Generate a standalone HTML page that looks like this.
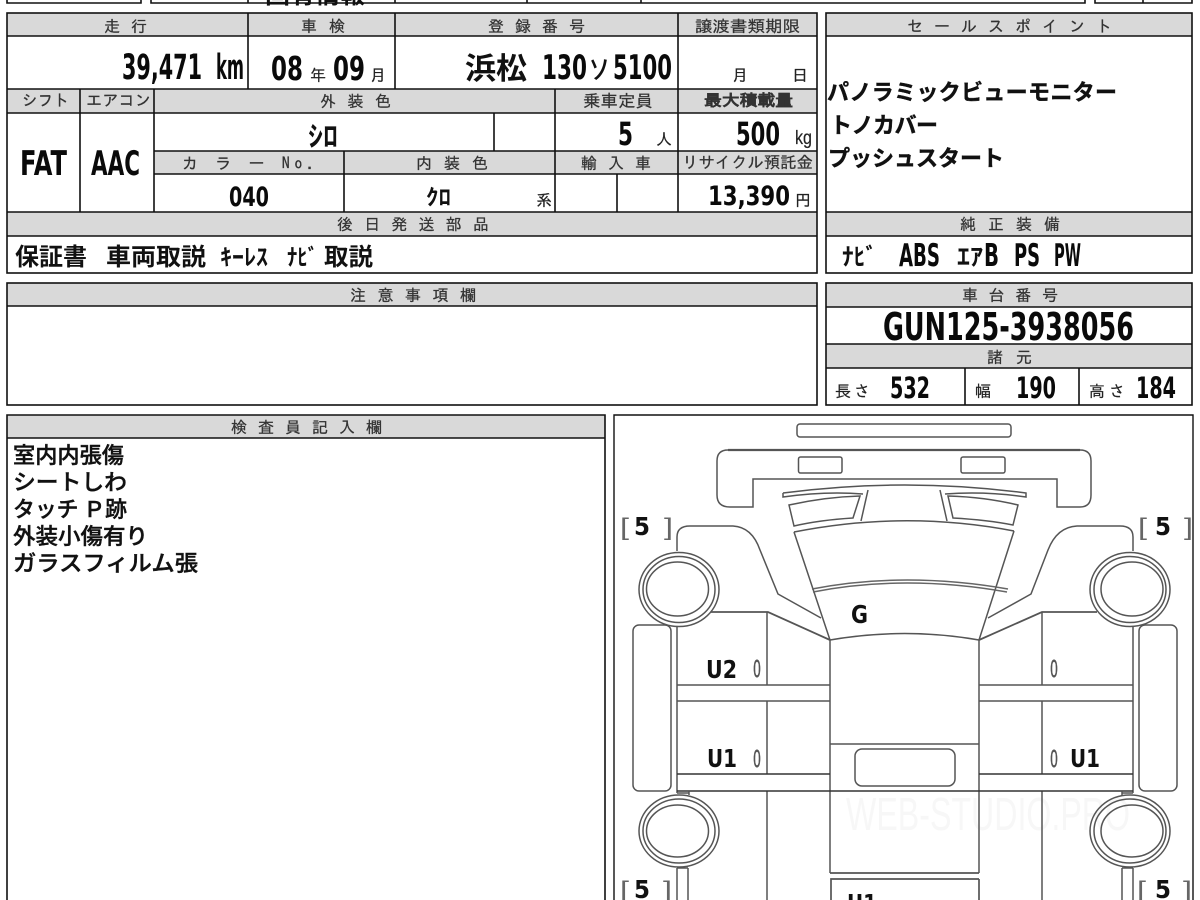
<!DOCTYPE html>
<html lang="ja"><head><meta charset="utf-8"><title>Inspection sheet</title>
<style>
html,body{margin:0;padding:0;background:#fff;width:1200px;height:900px;overflow:hidden}
svg{display:block;position:absolute;left:0;top:0;filter:blur(.35px)}
text{font-family:"Liberation Sans","IPAGothic","Noto Sans CJK JP",sans-serif;white-space:pre}
.h{font-family:"IPAGothic","Noto Sans CJK JP",sans-serif;font-size:16px;fill:#333;stroke:#333;stroke-width:.25}
.s{font-family:"IPAGothic","Noto Sans CJK JP",sans-serif;font-size:16px;fill:#222;stroke:#222;stroke-width:.2}
.v{font-family:"DejaVu Sans","Liberation Sans",sans-serif;font-weight:700;font-size:34px;fill:#0a0a0a}
.j{font-family:"Noto Sans CJK JP",sans-serif;font-weight:700;font-size:24px;fill:#111}
.n{font-family:"Noto Sans CJK JP",sans-serif;font-weight:500;font-size:22px;fill:#111;stroke:#111;stroke-width:.4}
.t{fill:none;stroke:#111;stroke-width:1.6}
.d{fill:none;stroke:#555;stroke-width:1.5}
.l{font-family:"DejaVu Sans","Liberation Sans",sans-serif;font-weight:700;font-size:25px;fill:#111}
.b{font-size:24px;fill:#666}
.z{font-family:"DejaVu Sans",sans-serif;font-size:23px;fill:#555;stroke:#555;stroke-width:.5}
</style></head><body>
<svg width="1200" height="900" viewBox="0 0 1200 900" xmlns="http://www.w3.org/2000/svg">
<!-- top stubs -->
<g class="t">
<path d="M7 0V3H141V0M151 0V3H1085V0M248 0V3M395 0V3M527 0V3M641 0V3M1095 0V3H1192V0M1143 0V3"/>
</g>
<text class="j" x="265" y="3" textLength="100" lengthAdjust="spacingAndGlyphs">固有情報</text>
<!-- grey header fills -->
<g fill="#d9d9d9">
<rect x="7" y="13" width="810" height="23"/><rect x="7" y="89" width="810" height="24"/>
<rect x="154" y="151" width="663" height="23"/><rect x="7" y="212" width="810" height="24"/>
<rect x="826" y="13" width="366" height="23"/><rect x="826" y="212" width="366" height="24"/>
<rect x="7" y="283" width="810" height="23"/><rect x="826" y="283" width="366" height="24"/>
<rect x="826" y="344" width="366" height="24"/><rect x="7" y="415" width="598" height="23"/>
</g>
<!-- table lines -->
<g class="t">
<rect x="7" y="13" width="810" height="260"/>
<path d="M7 36H817M7 89H817M7 113H817M154 151H817M154 174H817M7 212H817M7 236H817"/>
<path d="M248 13V89M395 13V89M678 13V212M80 89V212M154 89V212M344 151V212M555 89V212M494 113V151M617 174V212"/>
<rect x="826" y="13" width="366" height="260"/><path d="M826 36H1192M826 212H1192M826 236H1192"/>
<rect x="7" y="283" width="810" height="122"/><path d="M7 306H817"/>
<rect x="826" y="283" width="366" height="122"/><path d="M826 307H1192M826 344H1192M826 368H1192M965 368V405M1079 368V405"/>
<path d="M7 900V415H605V900M7 438H605"/>
<path d="M614 900V415H1193V900" stroke-width="1.4"/>
</g>
<!-- headers -->
<text class="h" x="104" y="32" textLength="43">走 行</text>
<text class="h" x="301" y="32" textLength="44">車 検</text>
<text class="h" x="488" y="32" textLength="97">登 録 番 号</text>
<text class="h" x="695" y="32" textLength="105" lengthAdjust="spacingAndGlyphs">譲渡書類期限</text>
<text class="h" x="22" y="106" textLength="47" lengthAdjust="spacingAndGlyphs">シフト</text>
<text class="h" x="86" y="106" textLength="65" lengthAdjust="spacingAndGlyphs">エアコン</text>
<text class="h" x="320" y="107" textLength="71">外 装 色</text>
<text class="h" x="583" y="107" textLength="70" lengthAdjust="spacingAndGlyphs" style="font-size:17px">乗車定員</text>
<text class="h" x="704" y="106" textLength="89" lengthAdjust="spacingAndGlyphs" style="font-weight:700">最大積載量</text>
<text class="h" x="182" y="169" textLength="133">カ ラ ー No.</text>
<text class="h" x="416" y="169" textLength="72">内 装 色</text>
<text class="h" x="581" y="169" textLength="70">輸 入 車</text>
<text class="h" x="682" y="168" textLength="131" lengthAdjust="spacingAndGlyphs">リサイクル預託金</text>
<text class="h" x="337" y="230" textLength="152">後 日 発 送 部 品</text>
<text class="h" x="907" y="32" textLength="205">セ ー ル ス ポ イ ン ト</text>
<text class="h" x="960" y="230" textLength="100">純 正 装 備</text>
<text class="h" x="350" y="301" textLength="126">注 意 事 項 欄</text>
<text class="h" x="962" y="301" textLength="96">車 台 番 号</text>
<text class="h" x="987" y="363" textLength="45">諸 元</text>
<text class="h" x="231" y="433" textLength="151">検 査 員 記 入 欄</text>
<!-- values -->
<text class="v" x="122" y="79" textLength="80" lengthAdjust="spacingAndGlyphs" style="font-size:35px">39,471</text>
<text class="v" x="216" y="79" textLength="28" lengthAdjust="spacingAndGlyphs" style="font-size:35px">km</text>
<text class="v" x="271" y="80" textLength="32" lengthAdjust="spacingAndGlyphs" style="font-size:33px">08</text>
<text class="s" x="310" y="81">年</text>
<text class="v" x="333" y="80" textLength="32" lengthAdjust="spacingAndGlyphs" style="font-size:33px">09</text>
<text class="s" x="370" y="81">月</text>
<text class="j" x="465" y="79" textLength="62" style="font-size:30px" lengthAdjust="spacingAndGlyphs">浜松</text>
<text class="v" x="542" y="79" textLength="45" lengthAdjust="spacingAndGlyphs">130</text>
<text class="j" x="589" y="79" textLength="20" lengthAdjust="spacingAndGlyphs" style="font-size:28px;font-weight:400">ｿ</text>
<text class="v" x="613" y="79" textLength="59" lengthAdjust="spacingAndGlyphs">5100</text>
<text class="s" x="732" y="81">月</text><text class="s" x="792" y="81">日</text>
<text class="j" x="308" y="146" textLength="30" lengthAdjust="spacingAndGlyphs" style="font-size:28px">ｼﾛ</text>
<text class="v" x="618" y="145" textLength="15" lengthAdjust="spacingAndGlyphs" style="font-size:32px">5</text>
<text class="s" x="656" y="145">人</text>
<text class="v" x="736" y="145" textLength="44" lengthAdjust="spacingAndGlyphs" style="font-size:32px">500</text>
<text class="s" x="795" y="144" textLength="17" lengthAdjust="spacingAndGlyphs" style="font-size:19px;font-family:'Liberation Sans',sans-serif">kg</text>
<text class="v" x="20" y="175" textLength="47" lengthAdjust="spacingAndGlyphs">FAT</text>
<text class="v" x="91" y="175" textLength="49" lengthAdjust="spacingAndGlyphs">AAC</text>
<text class="v" x="229" y="206" textLength="40" lengthAdjust="spacingAndGlyphs" style="font-size:27px">040</text>
<text class="j" x="426" y="205" textLength="25" lengthAdjust="spacingAndGlyphs" style="font-size:22px">ｸﾛ</text>
<text class="s" x="536" y="206">系</text>
<text class="v" x="708" y="205" textLength="82" lengthAdjust="spacingAndGlyphs" style="font-size:27px">13,390</text>
<text class="s" x="795" y="206">円</text>
<text class="j" x="15" y="265">保証書</text>
<text class="j" x="106" y="265" textLength="100" lengthAdjust="spacingAndGlyphs">車両取説</text>
<text class="j" x="220" y="265" textLength="48" lengthAdjust="spacingAndGlyphs" style="font-size:23px">ｷｰﾚｽ</text>
<text class="j" x="287" y="265" textLength="31" lengthAdjust="spacingAndGlyphs" style="font-size:23px">ﾅﾋﾞ</text>
<text class="j" x="324" y="265" textLength="49" lengthAdjust="spacingAndGlyphs">取説</text>
<!-- sale points -->
<text class="n" style="font-weight:700" x="827" y="100" textLength="290">パノラミックビューモニター</text>
<text class="n" style="font-weight:700" x="830" y="133" textLength="108">トノカバー</text>
<text class="n" style="font-weight:700" x="828" y="166" textLength="176">プッシュスタート</text>
<!-- equipment -->
<text class="j" x="842" y="265" textLength="35" lengthAdjust="spacingAndGlyphs" style="font-size:24px">ﾅﾋﾞ</text>
<text class="v" x="899" y="266" textLength="41" lengthAdjust="spacingAndGlyphs" style="font-size:31px">ABS</text>
<text class="j" x="957" y="265" textLength="26" lengthAdjust="spacingAndGlyphs" style="font-size:24px">ｴｱ</text>
<text class="v" x="984" y="266" textLength="15" lengthAdjust="spacingAndGlyphs" style="font-size:31px">B</text>
<text class="v" x="1014" y="266" textLength="26" lengthAdjust="spacingAndGlyphs" style="font-size:31px">PS</text>
<text class="v" x="1054" y="266" textLength="27" lengthAdjust="spacingAndGlyphs" style="font-size:31px">PW</text>
<!-- chassis -->
<text class="v" x="883" y="340" textLength="251" lengthAdjust="spacingAndGlyphs" style="font-size:38px">GUN125-3938056</text>
<text class="s" x="835" y="397" textLength="35">長さ</text>
<text class="v" x="890" y="398" textLength="40" lengthAdjust="spacingAndGlyphs" style="font-size:29px">532</text>
<text class="s" x="975" y="397">幅</text>
<text class="v" x="1016" y="398" textLength="40" lengthAdjust="spacingAndGlyphs" style="font-size:29px">190</text>
<text class="s" x="1089" y="397" textLength="36">高さ</text>
<text class="v" x="1136" y="398" textLength="40" lengthAdjust="spacingAndGlyphs" style="font-size:29px">184</text>
<!-- notes -->
<text class="n" x="13" y="463" textLength="111" lengthAdjust="spacingAndGlyphs">室内内張傷</text>
<text class="n" x="13" y="490" textLength="114" lengthAdjust="spacingAndGlyphs">シートしわ</text>
<text class="n" x="13" y="517" textLength="114" lengthAdjust="spacingAndGlyphs">タッチ Ｐ跡</text>
<text class="n" x="13" y="544" textLength="135" lengthAdjust="spacingAndGlyphs">外装小傷有り</text>
<text class="n" x="13" y="571" textLength="185" lengthAdjust="spacingAndGlyphs">ガラスフィルム張</text>
<!-- diagram -->
<text x="846" y="830" textLength="284" lengthAdjust="spacingAndGlyphs" font-size="46" fill="#f7f7f7">WEB-STUDIO.PRO</text>
<g class="d">
<rect x="797" y="424" width="214" height="13" rx="3"/>
<path d="M753 507H730Q717 507 717 495V461Q717 450 728 450H1080Q1091 450 1091 461V495Q1091 507 1080 507H1057V479H753Z"/>
<path d="M728 450H1080" stroke-width="2.2"/>
<rect x="798.500" y="457" width="43.500" height="16" rx="2"/><rect x="961" y="457" width="44" height="16" rx="2"/>
<!-- wipers and side glass -->
<path d="M783 493Q905 477 1026 493V497Q985 491 945 494M783 493V497Q825 491 863 494"/>
<path d="M868 490L861 521M940 490L947 521"/>
<path d="M789 505Q825 497 860 496L853 518Q820 520 794 526ZM1018 505Q985 497 948 496L953 518Q988 520 1013 525Z"/>
<!-- hood -->
<path d="M794 532Q905 510 1014 531"/>
<path d="M794 532L830 640M1014 531L979 640M830 640Q905 627 979 640"/>
<path d="M813 592Q905 574 1007 592M812 589Q905 571 1008 589" stroke="#666"/>
<!-- fenders -->
<path d="M677 551V537Q677 526 690 526H733Q752 527 760 550L778 594L821 618"/>
<path d="M1133 551V537Q1133 526 1120 526H1077Q1057 527 1048 550L1031 594L988 618"/>
<!-- doors -->
<path d="M711 612H768L830 640M1097 612H1042L979 640" stroke-width="1.8"/>
<path d="M767 612V685M767 701V774M767 791V900M1042 612V685M1042 701V774M1042 791V900"/>
<path d="M830 640V873M979 640V873M677 627V793M1133 627V793"/>
<path d="M677 685H830M677 701H830M979 685H1133M979 701H1133"/>
<path d="M677 774H830M979 774H1133M677 791H1133" stroke="#333"/>
<path d="M830 744H979"/>
<rect x="855" y="749" width="100" height="37" rx="7"/>
<path d="M830 873H979M831 900V879H979M979 879V900" stroke-width="1.7"/>
<!-- side panels -->
<rect x="633" y="625" width="38" height="166" rx="6"/>
<rect x="1139" y="625" width="38" height="166" rx="6"/>
<!-- wheels -->
<ellipse cx="679" cy="589.500" rx="40" ry="37"/><ellipse cx="679" cy="589.500" rx="36" ry="33"/><ellipse cx="677.500" cy="589" rx="31" ry="27"/>
<ellipse cx="1130" cy="589.500" rx="40" ry="37"/><ellipse cx="1130" cy="589.500" rx="36" ry="33"/><ellipse cx="1132" cy="589" rx="31" ry="27"/>
<ellipse cx="679" cy="831" rx="40" ry="36"/><ellipse cx="679" cy="831" rx="36" ry="32"/><ellipse cx="677.500" cy="831" rx="31" ry="26"/>
<ellipse cx="1130" cy="831" rx="40" ry="36"/><ellipse cx="1130" cy="831" rx="36" ry="32"/><ellipse cx="1132" cy="831" rx="31" ry="26"/>
<path d="M677 793H689M677 868H688M677 868V900M688 868V900M1122 793H1133M1122 868H1133M1122 868V900M1133 868V900"/>
<path d="M689 791V795M1122 791V795"/>
</g>
<text class="b" x="620" y="535" textLength="9" lengthAdjust="spacingAndGlyphs">[</text>
<text class="l" x="634" y="535" textLength="16" lengthAdjust="spacingAndGlyphs">5</text>
<text class="b" x="664" y="535" textLength="9" lengthAdjust="spacingAndGlyphs">]</text>
<text class="b" x="1138" y="535" textLength="9" lengthAdjust="spacingAndGlyphs">[</text>
<text class="l" x="1155" y="535" textLength="16" lengthAdjust="spacingAndGlyphs">5</text>
<text class="b" x="1184" y="535" textLength="9" lengthAdjust="spacingAndGlyphs">]</text>
<text class="b" x="620" y="898" textLength="9" lengthAdjust="spacingAndGlyphs">[</text>
<text class="l" x="634" y="898" textLength="16" lengthAdjust="spacingAndGlyphs">5</text>
<text class="b" x="663" y="898" textLength="9" lengthAdjust="spacingAndGlyphs">]</text>
<text class="b" x="1137" y="898" textLength="9" lengthAdjust="spacingAndGlyphs">[</text>
<text class="l" x="1155" y="898" textLength="16" lengthAdjust="spacingAndGlyphs">5</text>
<text class="b" x="1183" y="898" textLength="9" lengthAdjust="spacingAndGlyphs">]</text>
<text class="l" x="851" y="623" textLength="17" lengthAdjust="spacingAndGlyphs">G</text>
<text class="l" x="706" y="678" textLength="31" lengthAdjust="spacingAndGlyphs">U2</text>
<text class="z" x="753" y="677" textLength="8" lengthAdjust="spacingAndGlyphs">0</text>
<text class="z" x="1050" y="677" textLength="8" lengthAdjust="spacingAndGlyphs">0</text>
<text class="l" x="707" y="767" textLength="30" lengthAdjust="spacingAndGlyphs">U1</text>
<text class="z" x="753" y="767" textLength="8" lengthAdjust="spacingAndGlyphs">0</text>
<text class="z" x="1050" y="767" textLength="8" lengthAdjust="spacingAndGlyphs">0</text>
<text class="l" x="1070" y="767" textLength="30" lengthAdjust="spacingAndGlyphs">U1</text>
<text class="l" x="847" y="912" textLength="30" lengthAdjust="spacingAndGlyphs">U1</text>
</svg>
</body></html>
